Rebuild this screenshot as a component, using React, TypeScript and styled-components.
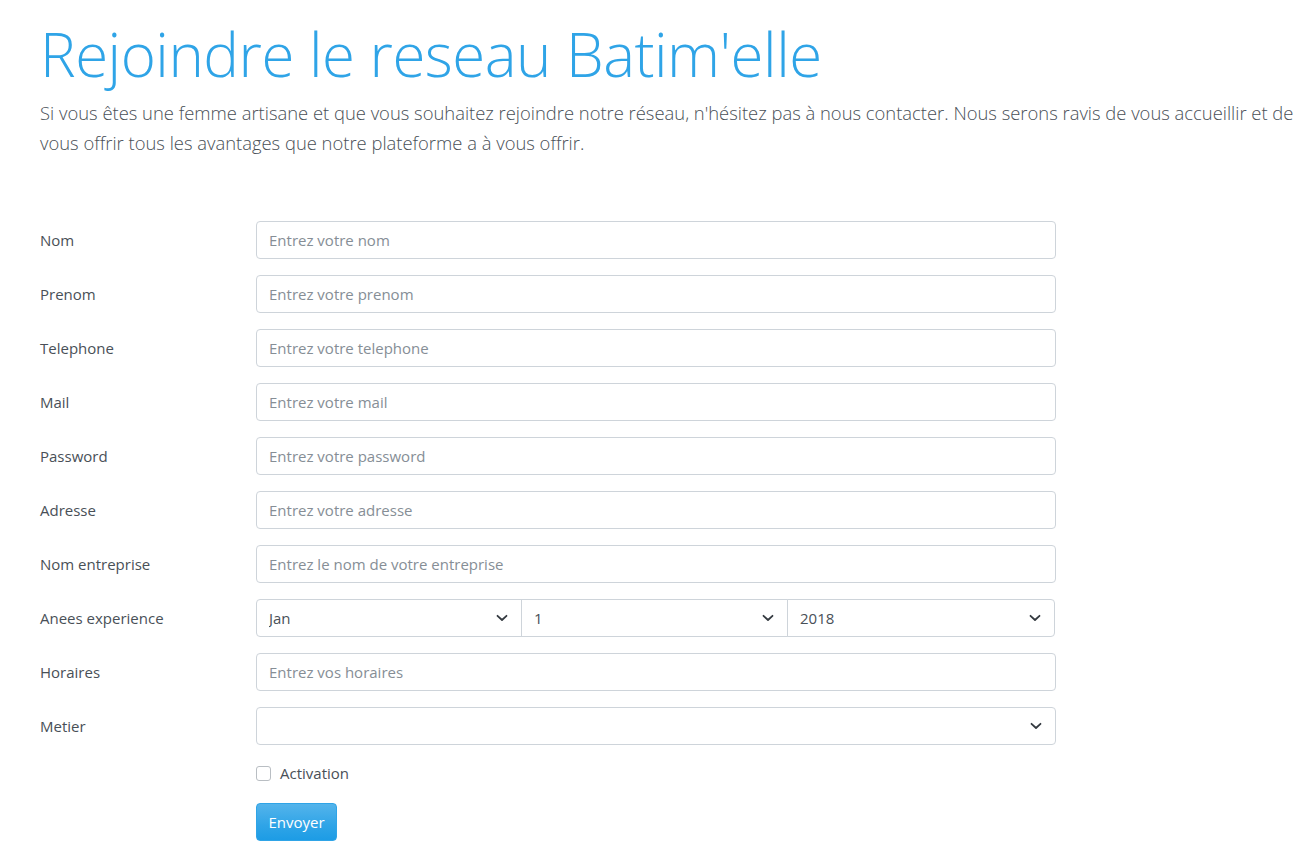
import React from "react";
import styled, { createGlobalStyle } from "styled-components";

const Global = createGlobalStyle`
  html, body { margin: 0; padding: 0; background: #fff; }
  body {
    font-family: "Open Sans", "Noto Sans", "Liberation Sans", sans-serif;
    color: #495057;
  }
  * { box-sizing: border-box; }
`;

const Page = styled.div`
  padding: 18px 0 0 40px;
`;

const Title = styled.h1`
  margin: 0;
  font-weight: 300;
  font-size: 60px;
  line-height: 72px;
  color: #2fa4e7;
  letter-spacing: -0.5px;
`;

const Lead = styled.p`
  margin: 8px 0 0;
  font-size: 18.4px;
  font-weight: 300;
  line-height: 30px;
  color: #495057;
  max-width: 1268px;
`;

const Form = styled.form`
  margin-top: 63px;
  display: flex;
  flex-direction: column;
  gap: 16px;
`;

const Row = styled.div`
  display: grid;
  grid-template-columns: 216px 800px;
  align-items: center;
`;

const Label = styled.label`
  font-size: 15px;
  color: #495057;
`;

const Input = styled.input`
  height: 38px;
  width: 100%;
  padding: 0 12px;
  border: 1px solid #ced4da;
  border-radius: 4px;
  font-family: inherit;
  font-size: 15px;
  color: #495057;
  background: #fff;
  &::placeholder { color: #868e96; opacity: 1; }
`;

const SelectGroup = styled.div`
  display: grid;
  grid-template-columns: 266px 266px 1fr;
  width: 799px;
`;

const SelectWrap = styled.div<{ $pos?: "first" | "mid" | "last" | "single" }>`
  position: relative;
  margin-left: ${(p) => (p.$pos === "mid" || p.$pos === "last" ? "-1px" : "0")};
`;

const Select = styled.select<{ $pos?: "first" | "mid" | "last" | "single" }>`
  appearance: none;
  -webkit-appearance: none;
  width: 100%;
  height: 38px;
  padding: 0 32px 0 12px;
  border: 1px solid #ced4da;
  border-radius: ${(p) =>
    p.$pos === "first"
      ? "4px 0 0 4px"
      : p.$pos === "mid"
      ? "0"
      : p.$pos === "last"
      ? "0 4px 4px 0"
      : "4px"};
  font-family: inherit;
  font-size: 15px;
  color: #495057;
  background: #fff;
`;

const Chevron = styled.svg`
  position: absolute;
  right: 14px;
  top: 15px;
  width: 12px;
  height: 8px;
  pointer-events: none;
`;

const CheckRow = styled.div`
  margin-left: 216px;
  display: flex;
  align-items: center;
  gap: 9px;
  margin-top: 2px;
`;

const Check = styled.span`
  width: 15px;
  height: 15px;
  border: 1px solid #b9bec3;
  border-radius: 3px;
  background: #fff;
`;

const CheckLabel = styled.span`
  font-size: 15px;
  color: #495057;
`;

const Button = styled.button`
  margin-left: 216px;
  margin-top: 4px;
  width: 81px;
  height: 38px;
  border: 1px solid #2fa4e7;
  border-radius: 4px;
  background-image: linear-gradient(#54b4eb, #2fa4e7 60%, #1d9ce5);
  color: #fff;
  font-family: inherit;
  font-size: 15px;
  padding: 0;
  align-self: flex-start;
`;

const Arrow = () => (
  <Chevron viewBox="0 0 12 8">
    <path d="M1.5 1.8 L6 6 L10.5 1.8" fill="none" stroke="#343a40" strokeWidth="1.8" strokeLinecap="round" strokeLinejoin="round" />
  </Chevron>
);

const fields: [string, string][] = [
  ["Nom", "Entrez votre nom"],
  ["Prenom", "Entrez votre prenom"],
  ["Telephone", "Entrez votre telephone"],
  ["Mail", "Entrez votre mail"],
  ["Password", "Entrez votre password"],
  ["Adresse", "Entrez votre adresse"],
  ["Nom entreprise", "Entrez le nom de votre entreprise"],
];

export default function App() {
  return (
    <Page>
      <Global />
      <Title>Rejoindre le reseau Batim'elle</Title>
      <Lead>
        Si vous êtes une femme artisane et que vous souhaitez rejoindre notre réseau, n'hésitez pas à nous contacter. Nous serons ravis de vous accueillir et de vous offrir tous les avantages que notre plateforme a à vous offrir.
      </Lead>
      <Form onSubmit={(e) => e.preventDefault()}>
        {fields.map(([l, p]) => (
          <Row key={l}>
            <Label>{l}</Label>
            <Input placeholder={p} type={l === "Password" ? "password" : "text"} />
          </Row>
        ))}
        <Row>
          <Label>Anees experience</Label>
          <SelectGroup>
            <SelectWrap $pos="first">
              <Select $pos="first" defaultValue="Jan">
                <option>Jan</option>
              </Select>
              <Arrow />
            </SelectWrap>
            <SelectWrap $pos="mid">
              <Select $pos="mid" defaultValue="1">
                <option>1</option>
              </Select>
              <Arrow />
            </SelectWrap>
            <SelectWrap $pos="last">
              <Select $pos="last" defaultValue="2018">
                <option>2018</option>
              </Select>
              <Arrow />
            </SelectWrap>
          </SelectGroup>
        </Row>
        <Row>
          <Label>Horaires</Label>
          <Input placeholder="Entrez vos horaires" />
        </Row>
        <Row>
          <Label>Metier</Label>
          <SelectWrap $pos="single">
            <Select $pos="single" defaultValue="">
              <option value=""></option>
            </Select>
            <Arrow />
          </SelectWrap>
        </Row>
        <CheckRow>
          <Check />
          <CheckLabel>Activation</CheckLabel>
        </CheckRow>
        <Button type="submit">Envoyer</Button>
      </Form>
    </Page>
  );
}
